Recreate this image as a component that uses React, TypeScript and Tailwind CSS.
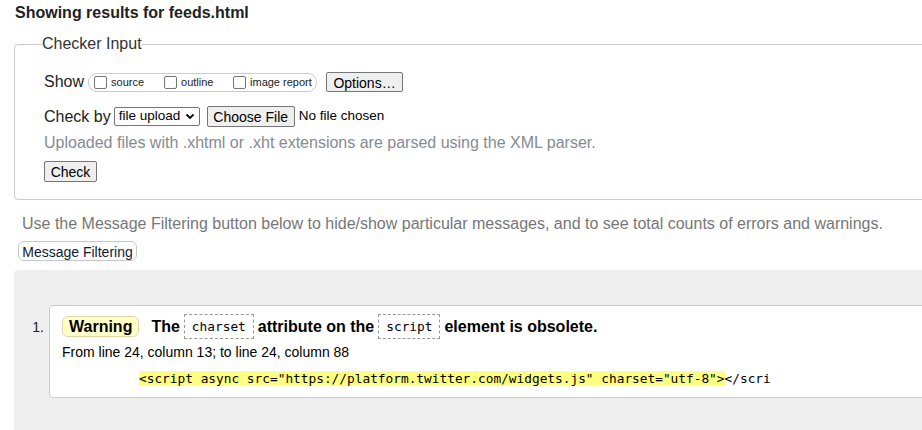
import React from 'react'

const SANS = 'font-["Liberation_Sans",Arial,sans-serif]'
const MONO = 'font-["DejaVu_Sans_Mono","Liberation_Mono",monospace]'

const Chevron: React.FC = () => (
  <svg width="10" height="7" viewBox="0 0 10 7" className="ml-[5px]">
    <path d="M1.5 1.5 L5 5 L8.5 1.5" fill="none" stroke="#000" strokeWidth="1.8" />
  </svg>
)

const Box: React.FC<{ label: string }> = ({ label }) => (
  <label className="flex items-center">
    <span className="w-[13px] h-[13px] border border-[#767676] rounded-[2px] bg-white" />
    <span className="ml-[4px] text-[11px] text-[#222]">{label}</span>
  </label>
)

const App: React.FC = () => {
  return (
    <div className={`w-full h-[430px] overflow-hidden bg-white text-[#222] ${SANS}`}>
      <div className="w-[960px]">
        {/* タイトル */}
        <h2 className="pt-[4px] pl-[15px] text-[16px] leading-[18px] font-bold text-[#222]">
          Showing results for feeds.html
        </h2>

        {/* Checker Input */}
        <fieldset className="mt-[13px] ml-[14px] border border-[#ccc] rounded-[4px] pl-[29px] pb-[17px]">
          <legend className="-ml-[2px] text-[16px] leading-[18px] text-[#333]">
            Checker Input
          </legend>

          <div className="mt-[19px] h-[20px] flex items-center">
            <span className="text-[16px] text-[#222]">Show</span>
            <div className="ml-[4px] h-[19px] w-[229px] border border-[#ccc] rounded-[9px] flex items-center pl-[5px]">
              <div className="w-[70px]"><Box label="source" /></div>
              <div className="w-[69px]"><Box label="outline" /></div>
              <Box label="image report" />
            </div>
            <button className="ml-[9px] h-[20px] w-[77px] bg-[#efefef] border border-[#767676] rounded-[2px] text-[14px] text-black">
              Options…
            </button>
          </div>

          <div className="mt-[14px] h-[21px] flex items-center">
            <span className="text-[16px] text-[#222]">Check by</span>
            <div className="ml-[3px] h-[19px] w-[86px] border border-[#767676] rounded-[2px] bg-white flex items-center pl-[4px] text-[13.5px] text-black">
              file upload
              <Chevron />
            </div>
            <button className="ml-[7px] h-[21px] w-[88px] bg-[#efefef] border border-[#767676] rounded-[2px] text-[14px] text-black">
              Choose File
            </button>
            <span className="ml-[4px] text-[13.5px] text-black">No file chosen</span>
          </div>

          <p className="mt-[7px] text-[16px] leading-[18px] text-[#858b94]">
            Uploaded files with .xhtml or .xht extensions are parsed using the XML parser.
          </p>

          <button className="mt-[9px] h-[21px] w-[53px] bg-[#efefef] border border-[#767676] rounded-[2px] text-[14px] text-black block">
            Check
          </button>
        </fieldset>

        {/* フィルタ説明 */}
        <p className="mt-[15px] pl-[22px] text-[16px] leading-[18px] text-[#777]">
          Use the Message Filtering button below to hide/show particular messages, and to see total counts of errors and warnings.
        </p>
        <button className="block mt-[8px] ml-[18px] h-[20px] w-[119px] bg-white border border-[#c8c8c8] rounded-[6px] text-[14px] text-[#0f1a33]">
          Message Filtering
        </button>

        {/* 結果一覧 */}
        <div className="mt-[9px] ml-[14px] h-[200px] bg-[#eee] rounded-tl-[4px] pt-[35px]">
          <div className="flex">
            <div className="w-[35px] shrink-0 pr-[5px] pt-[12px] text-right text-[14px] text-[#222]">1.</div>
            <div className="flex-1 bg-white border border-[#ccc] rounded-l-[4px] pl-[12px] pt-[8px] pb-[10px]">
              <div className="h-[25px] flex items-center text-[16px] font-bold text-black">
                <span className="h-[21px] px-[6px] flex items-center bg-[#ffffc8] border border-[#ddd7a8] rounded-[6px]">
                  Warning
                </span>
                <span className="ml-[12px]">The</span>
                <code className={`ml-[4px] h-[25px] px-[7px] flex items-center border border-dashed border-[#999] font-normal text-[12.8px] ${MONO}`}>
                  charset
                </code>
                <span className="ml-[4px]">attribute on the</span>
                <code className={`ml-[4px] h-[25px] px-[7px] flex items-center border border-dashed border-[#999] font-normal text-[12.8px] ${MONO}`}>
                  script
                </code>
                <span className="ml-[4px]">element is obsolete.</span>
              </div>
              <p className="mt-[5px] text-[14px] leading-[17px] text-black">
                From line 24, column 13; to line 24, column 88
              </p>
              <p className={`mt-[10px] pl-[77px] text-[12.8px] leading-[16px] text-black ${MONO}`}>
                <span className="bg-[#ffff80]">
                  {'<script async src="https://platform.twitter.com/widgets.js" charset="utf-8">'}
                </span>
                {'</scri'}
              </p>
            </div>
          </div>
        </div>
      </div>
    </div>
  )
}

export default App
